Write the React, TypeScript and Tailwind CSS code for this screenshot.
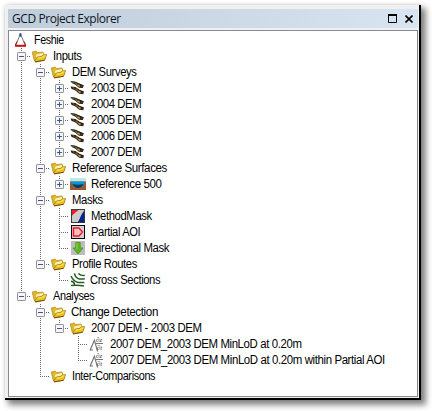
import React from "react";

type IconName = "root" | "folder" | "dem" | "water" | "mask" | "aoi" | "arrow" | "cross" | "dod";
type Row = { guides: string; toggle?: "+" | "-"; icon: IconName; text: string; cls: string };

// One guide character per tree column: "|" passes through, "T" branches, "L" ends, "." is blank.
const rows: Row[] = [
  { guides: "", icon: "root", text: "Feshie", cls: "scale-x-[0.89]" },
  { guides: "T", toggle: "-", icon: "folder", text: "Inputs", cls: "scale-x-[0.94]" },
  { guides: "|T", toggle: "-", icon: "folder", text: "DEM Surveys", cls: "scale-x-[0.935]" },
  { guides: "||T", toggle: "+", icon: "dem", text: "2003 DEM", cls: "scale-x-[0.94]" },
  { guides: "||T", toggle: "+", icon: "dem", text: "2004 DEM", cls: "scale-x-[0.94]" },
  { guides: "||T", toggle: "+", icon: "dem", text: "2005 DEM", cls: "scale-x-[0.94]" },
  { guides: "||T", toggle: "+", icon: "dem", text: "2006 DEM", cls: "scale-x-[0.94]" },
  { guides: "||L", toggle: "+", icon: "dem", text: "2007 DEM", cls: "scale-x-[0.94]" },
  { guides: "|T", toggle: "-", icon: "folder", text: "Reference Surfaces", cls: "scale-x-[0.96]" },
  { guides: "||L", toggle: "+", icon: "water", text: "Reference 500", cls: "scale-x-[0.96]" },
  { guides: "|T", toggle: "-", icon: "folder", text: "Masks", cls: "scale-x-[0.94]" },
  { guides: "||T", icon: "mask", text: "MethodMask", cls: "scale-x-[0.94]" },
  { guides: "||T", icon: "aoi", text: "Partial AOI", cls: "scale-x-[0.93]" },
  { guides: "||L", icon: "arrow", text: "Directional Mask", cls: "scale-x-[0.95]" },
  { guides: "|L", toggle: "-", icon: "folder", text: "Profile Routes", cls: "scale-x-[0.93]" },
  { guides: "|.L", icon: "cross", text: "Cross Sections", cls: "-ml-px scale-x-[0.935]" },
  { guides: "L", toggle: "-", icon: "folder", text: "Analyses", cls: "scale-x-[0.91]" },
  { guides: ".T", toggle: "-", icon: "folder", text: "Change Detection", cls: "-ml-px scale-x-[0.97]" },
  { guides: ".|L", toggle: "-", icon: "folder", text: "2007 DEM - 2003 DEM", cls: "scale-x-[0.95]" },
  { guides: ".|.T", icon: "dod", text: "2007 DEM_2003 DEM MinLoD at 0.20m", cls: "scale-x-[0.95]" },
  { guides: ".|.L", icon: "dod", text: "2007 DEM_2003 DEM MinLoD at 0.20m within Partial AOI", cls: "scale-x-[0.952]" },
  { guides: ".L", icon: "folder", text: "Inter-Comparisons", cls: "scale-x-[0.905]" },
];

function Guide({ kind, toggle }: { kind: string; toggle?: "+" | "-" }) {
  return (
    <svg className="block h-4 w-[19px] shrink-0" viewBox="0 0 19 16">
      {kind !== "." && (
        <path d={kind === "L" ? "M9.5 0V9" : "M9.5 0V16"} stroke="#686868" strokeDasharray="1 1" fill="none" />
      )}
      {(kind === "T" || kind === "L") && (
        <path d="M9 8.5H19" stroke="#686868" strokeDasharray="1 1" fill="none" />
      )}
      {toggle && (
        <>
          <rect x="5.5" y="4.5" width="8" height="8" rx=".6" fill="#f6f6f6" stroke="#929292" />
          <path d={toggle === "+" ? "M7 8.5H12M9.5 6V11" : "M7 8.5H12"} stroke="#3d55a5" fill="none" />
        </>
      )}
    </svg>
  );
}

function Icon({ name }: { name: IconName }) {
  return (
    <svg className="block h-4 w-[22px] shrink-0" viewBox="0 0 22 16">
      {name === "root" && (
        <>
          <path d="M8.3 2L4 13M8.6 2L13 13" stroke="#777" fill="none" />
          <path d="M8.4 1.2V4.6" stroke="#283a9c" strokeWidth="1.8" />
          <path d="M3 13.8H14" stroke="#c90d12" strokeWidth="2" />
          <path d="M3.4 13L4.8 9.5M13.6 13L12.2 9.5" stroke="#8d2020" />
        </>
      )}
      {name === "folder" && (
        <>
          <path d="M1.2 4L5 3L6.8 4.6L12 4L13.6 8L5 13.2L3.2 12.4Z" fill="#dfb52f" stroke="#b08c28" strokeWidth=".7" />
          <path d="M5.2 6.4L11.8 5L12.4 7L8 8.6L5 10.6Z" fill="#fff3b0" />
          <path d="M3.6 13.2L6.2 9L10.6 8.6L12.2 7L15.6 6.6L13.8 12L5 13.8Z" fill="#f0c21c" stroke="#a17c14" strokeWidth=".8" />
          <path d="M6.8 10L11.2 9.5L12.7 8.1L14.4 7.8" stroke="#fbe566" fill="none" strokeWidth="1.1" />
          <path d="M4 13.9L13.6 12.3" stroke="#6b500c" />
        </>
      )}
      {name === "dem" && (
        <>
          <path d="M1.2 .9L6 1.4L10.5 3.6L14.8 5.2L13.8 8L10 7.8L6.4 4.8L3 3Z" fill="#1e1f17" />
          <path d="M1.6 6.4L6.4 7L10.6 9.8L15 11.4L14.2 14.2L10.2 13.8L6.4 10.6L2.4 8.8Z" fill="#1e1f17" />
          <path d="M6 3L8.6 5M6.6 8.8L9 10.9" stroke="#b2552a" strokeWidth="1.4" />
          <path d="M8.6 5L11 6.4M9.4 11.2L11.6 12.5" stroke="#a5ac4b" strokeWidth="1.6" />
          <path d="M3.2 1.9L5.4 2.6M3.6 7.6L5.8 8.4" stroke="#66783c" />
          <path d="M12 6.4L13.4 6.8M12.4 12.6L13.6 13" stroke="#9c3020" />
        </>
      )}
      {name === "water" && (
        <>
          <path d="M1 2H17V6H1Z" fill="#b9e7ee" />
          <path d="M1 5.5H17V14H1Z" fill="#a0562a" />
          <path d="M2 5.5H16Q15 12 9 12Q3 12 2 5.5Z" fill="#1293cb" />
          <path d="M3.4 8Q9 9.5 14.6 8Q12.6 12 9 12Q5.4 12 3.4 8Z" fill="#073a5d" />
        </>
      )}
      {name === "mask" && (
        <>
          <rect x="2" y="1" width="14" height="14" fill="#cbcbcb" />
          <path d="M2 1H10.5L2 8.5Z" fill="#ed1d24" />
          <path d="M16 2V15H8C11 12 11 7 16 2Z" fill="#06248e" />
          <rect x="2.5" y="1.5" width="13" height="13" fill="none" stroke="#3a3a3a" />
        </>
      )}
      {name === "aoi" && (
        <>
          <rect x="2.5" y="1.5" width="13" height="13" fill="#d2d2d2" stroke="#080808" />
          <path d="M4.5 4H10L13.5 8L10 12H4.5Z" fill="#ffc1c1" stroke="#f21822" strokeWidth="1.4" />
        </>
      )}
      {name === "arrow" && (
        <>
          <rect x="2" y="1" width="14" height="14" fill="#bdbdbd" />
          <path d="M6.8 2.5H11.2V8H14L9 14L4 8H6.8Z" fill="#62b622" stroke="#479619" strokeWidth=".8" />
          <path d="M8 3V9" stroke="#94d153" />
        </>
      )}
      {name === "cross" && (
        <g fill="none" stroke="#285d27" strokeWidth="1.5">
          <path d="M9.6 1.2Q10.6 3.6 15.8 3.4" />
          <path d="M5.4 1.4Q6.6 6.4 10.4 7Q13 7.3 15.8 6.8" />
          <path d="M2 4Q4.6 9.6 9 10.4Q12.4 10.8 15.4 10.4" />
          <path d="M2 9.2Q5 9.4 5.6 12.6M2 13.6Q8 12.6 15 14" />
        </g>
      )}
      {name === "dod" && (
        <>
          <path d="M2 14.5L6.4 4.2L9.6 15.5M1.6 14H5" stroke="#777" strokeWidth="1.2" fill="none" />
          <path d="M8 7.5H15" stroke="#777" />
          <text x="8" y="6.2" fontSize="7" fontStyle="italic" fontFamily="Liberation Serif, serif" fill="#444">∂z</text>
          <text x="8.8" y="13.6" fontSize="7" fontStyle="italic" fontFamily="Liberation Serif, serif" fill="#444">∂t</text>
        </>
      )}
    </svg>
  );
}

export default function App() {
  return (
    <main className="h-[411px] w-[432px] overflow-hidden bg-white pl-[5px] pt-[5px]">
      <section className="flex h-[395px] w-[416px] flex-col border-r-2 border-b-2 border-black bg-[#f0f0f0] pt-1 pr-px pb-px pl-[3px] shadow-[4px_4px_6px_1px_rgba(0,0,0,0.48),0_0_4px_rgba(0,0,0,0.12)]">
        <header className="flex h-[19px] shrink-0 items-center justify-between bg-linear-to-r from-[#bfcddb] to-[#d7e4f2] pl-1 pr-[5px]">
          <h1 className="font-['Open_Sans',sans-serif] text-[12px] leading-[19px] tracking-[-0.43px] text-[#10151d]">GCD Project Explorer</h1>
          <div className="flex h-full items-center gap-2">
            <svg className="h-[9px] w-[9px]" viewBox="0 0 9 9"><path d="M.5 1V8.5H8.5V1" fill="none" stroke="#000" /><path d="M0 1H9" stroke="#000" strokeWidth="2" /></svg>
            <svg className="h-[8px] w-[8px]" viewBox="0 0 8 8"><path d="M.5 .5L7.5 7.5M7.5 .5L.5 7.5" stroke="#000" strokeWidth="1.6" /></svg>
          </div>
        </header>
        <div className="mt-[2px] flex-1 border border-[#858a96] bg-white pt-px pl-[3px]">
          {rows.map((r, i) => (
            <div key={i} className="flex h-4 items-center whitespace-nowrap">
              {r.guides.split("").map((g, n) => (
                <Guide key={n} kind={g} toggle={n === r.guides.length - 1 ? r.toggle : undefined} />
              ))}
              <Icon name={r.icon} />
              <span className={`origin-left font-['Liberation_Sans',Arial,sans-serif] text-[12px] leading-4 tracking-[-0.4px] text-black ${r.cls}`}>{r.text}</span>
            </div>
          ))}
        </div>
      </section>
    </main>
  );
}
